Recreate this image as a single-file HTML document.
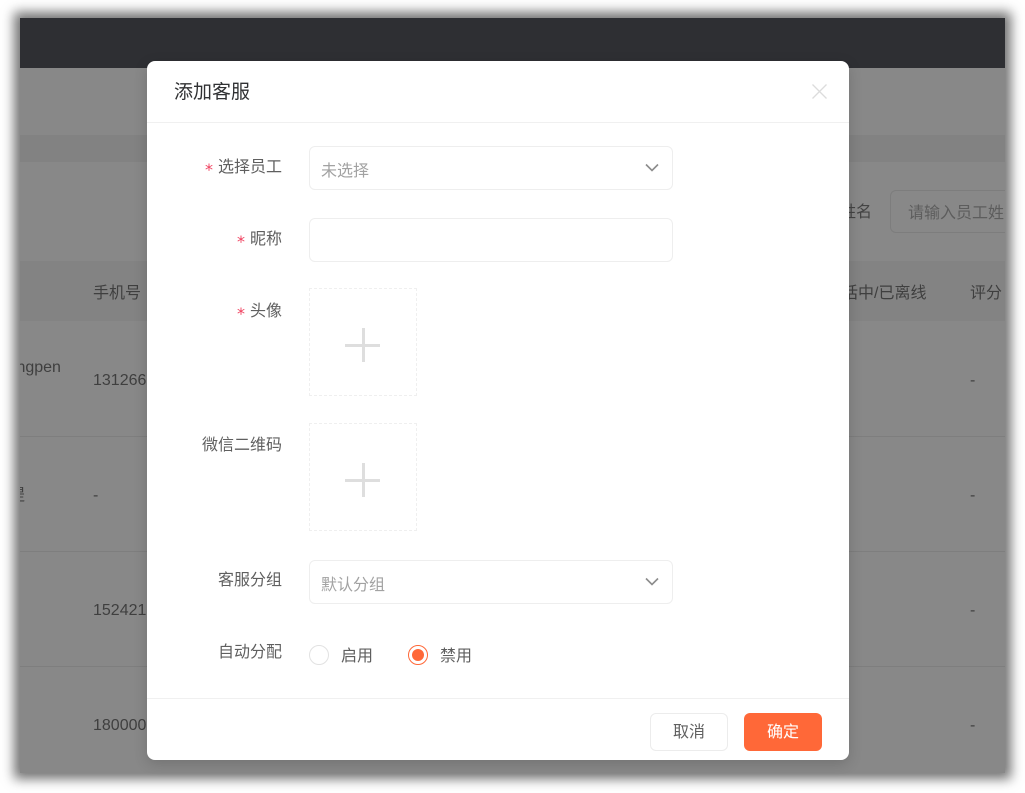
<!DOCTYPE html>
<html><head><meta charset="utf-8">
<style>
html,body{margin:0;padding:0;background:#fff;width:1025px;height:793px;overflow:hidden}
*{box-sizing:border-box}
body{font-family:"Liberation Sans","Noto Sans CJK SC",sans-serif;font-size:14px;position:relative}
.a{position:absolute;white-space:nowrap}
#frame{position:absolute;left:20px;top:18px;width:985px;height:755px;background:#888;box-shadow:0 0 11px 6px rgba(0,0,0,.55);overflow:hidden}
.bg{color:#3f3f3f;font-size:16px;line-height:20px}
.line{position:absolute;left:0;width:985px;height:1px;background:#7e7e7e}
#modal{position:absolute;left:147px;top:61px;width:702px;height:699px;background:#fff;border-radius:8px;box-shadow:0 4px 14px rgba(0,0,0,.16)}
.lab{position:absolute;right:567px;font-size:16px;line-height:22px;color:#5f5f5f;white-space:nowrap}
.lab i{font-style:normal;color:#f0415f;font-size:16px;margin-right:5px;font-family:"DejaVu Sans",sans-serif;font-weight:normal;position:relative;top:3px}
.inp{position:absolute;left:162px;width:364px;height:44px;border:1px solid #eee;border-radius:6px;font-size:16px;color:#a2a2a2;line-height:50px;padding-left:11px}
.inp svg{position:absolute;right:13px;top:16px}
.up{position:absolute;left:162px;width:108px;height:108px;border:1px dashed #efefef}
.up:before{content:"";position:absolute;left:35px;top:55px;width:35px;height:3px;background:#dedede}
.up:after{content:"";position:absolute;left:51.5px;top:39px;width:3px;height:34px;background:#dedede}
.radio{position:absolute;top:584px;width:20px;height:20px;border-radius:50%;border:1px solid #e2e2e2}
.btn{position:absolute;top:652px;height:38px;border-radius:6px;text-align:center;line-height:40px;font-size:16px}
</style></head><body>
<div id="frame">
<div class="a" style="left:0;top:0;width:985px;height:50px;background:#2e2f33"></div>
<div class="a" style="left:0;top:117px;width:985px;height:27px;background:#828282"></div>
<div class="a" style="left:0;top:243px;width:985px;height:60px;background:#838383"></div>
<div class="line" style="top:418px"></div>
<div class="line" style="top:533px"></div>
<div class="line" style="top:648px"></div>
<div class="a bg" style="left:820px;top:185px;color:#444">姓名</div>
<div class="a" style="left:870px;top:172px;width:140px;height:43px;border:1px solid #7d7d7d;border-radius:6px;color:#5d5d5d;font-size:16px;line-height:45px;padding-left:17px">请输入员工姓名</div>
<div class="a bg" style="left:73px;top:266px">手机号</div>
<div class="a bg" style="left:806px;top:266px">通话中/已离线</div>
<div class="a bg" style="left:950px;top:266px">评分</div>
<div class="a bg" style="left:-24px;top:340px">Dengpen</div>
<div class="a bg" style="left:73px;top:353px">131266</div>
<div class="a bg" style="left:-11px;top:468px">提</div>
<div class="a bg" style="left:73px;top:468px">-</div>
<div class="a bg" style="left:73px;top:583px">152421</div>
<div class="a bg" style="left:73px;top:698px">180000</div>
<div class="a bg" style="left:950px;top:353px">-</div>
<div class="a bg" style="left:950px;top:468px">-</div>
<div class="a bg" style="left:950px;top:583px">-</div>
<div class="a bg" style="left:950px;top:698px">-</div>
</div>
<div id="modal">
<div class="a" style="left:27px;top:19px;font-size:19px;line-height:25px;color:#303133">添加客服</div>
<svg class="a" style="left:664px;top:22px" width="17" height="17" viewBox="0 0 17 17"><path d="M1.5 1.5L15.5 15.5M15.5 1.5L1.5 15.5" stroke="#dcdcdc" stroke-width="1.3" fill="none"/></svg>
<div class="a" style="left:0;top:61px;width:702px;height:1px;background:#f0f0f0"></div>
<div class="lab" style="top:95px"><i>*</i>选择员工</div>
<div class="inp" style="top:85px">未选择<svg width="14" height="9" viewBox="0 0 14 9"><path d="M1 1.5L7 7.5L13 1.5" stroke="#8c8c8c" stroke-width="1.6" fill="none"/></svg></div>
<div class="lab" style="top:167px"><i>*</i>昵称</div>
<div class="inp" style="top:157px"></div>
<div class="lab" style="top:239px"><i>*</i>头像</div>
<div class="up" style="top:227px"></div>
<div class="lab" style="top:374px">微信二维码</div>
<div class="up" style="top:362px"></div>
<div class="lab" style="top:509px">客服分组</div>
<div class="inp" style="top:499px">默认分组<svg width="14" height="9" viewBox="0 0 14 9"><path d="M1 1.5L7 7.5L13 1.5" stroke="#8c8c8c" stroke-width="1.6" fill="none"/></svg></div>
<div class="lab" style="top:581px">自动分配</div>
<div class="radio" style="left:162px"></div>
<div class="a" style="left:194px;top:586px;font-size:16px;line-height:20px;color:#5f5f5f">启用</div>
<div class="radio" style="left:261px;border-color:#ff6838"><div style="position:absolute;left:3px;top:3px;width:12px;height:12px;border-radius:50%;background:#ff6838"></div></div>
<div class="a" style="left:293px;top:586px;font-size:16px;line-height:20px;color:#5f5f5f">禁用</div>
<div class="a" style="left:0;top:637px;width:702px;height:1px;background:#f0f0f0"></div>
<div class="btn" style="left:503px;width:78px;border:1px solid #ececec;color:#606060;line-height:38px">取消</div>
<div class="btn" style="left:597px;width:78px;background:#ff6838;color:#fff">确定</div>
</div>
</body></html>
